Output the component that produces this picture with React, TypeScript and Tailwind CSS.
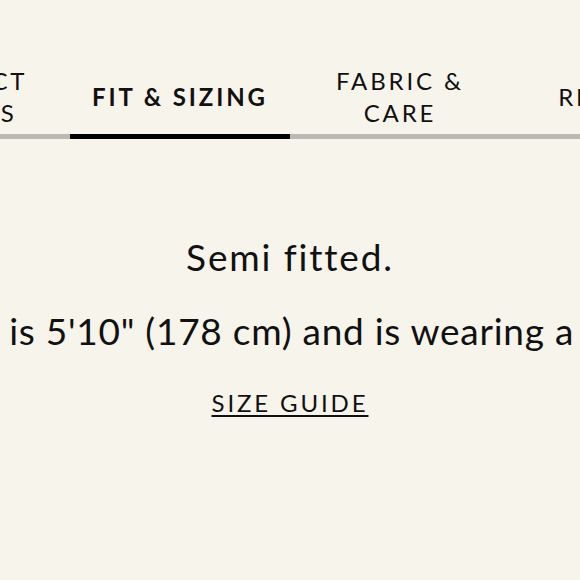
const tabs = [
  { label: ['PRODUCT', 'DETAILS'], active: false },
  { label: ['FIT & SIZING'], active: true },
  { label: ['FABRIC &', 'CARE'], active: false },
  { label: ['REVIEWS'], active: false },
];

export default function App() {
  return (
    <div className="w-[580px] h-[580px] overflow-hidden bg-[#f7f4ec] text-[#111111] font-['Lato',_'Liberation_Sans',_sans-serif]">
      {/* Tabs */}
      <div className="flex ml-[-150px] w-[880px] border-b-[5px] border-[#bcb9b2] h-[139px]">
        {tabs.map((tab) => (
          <div
            key={tab.label.join(' ')}
            className={
              tab.active
                ? 'w-[220px] shrink-0 flex flex-col items-center justify-center text-center mb-[-5px] border-b-[5px] border-black pt-[60px]'
                : 'w-[220px] shrink-0 flex flex-col items-center justify-center text-center pt-[60px]'
            }
          >
            {tab.label.map((line) => (
              <span
                key={line}
                className={
                  tab.active
                    ? 'text-[24px] leading-[32px] font-bold tracking-[0.12em]'
                    : 'text-[24px] leading-[32px] tracking-[0.12em]'
                }
              >
                {line}
              </span>
            ))}
          </div>
        ))}
      </div>

      {/* Content */}
      <div className="flex flex-col items-center pt-[96px]">
        <p className="text-[37px] leading-[44px] tracking-[0.05em] whitespace-nowrap">Semi fitted.</p>
        <div className="w-full flex justify-center mt-[30px]">
          <p className="text-[37px] leading-[44px] tracking-[0.02em] whitespace-nowrap shrink-0">
            Model is 5'10" (178 cm) and is wearing a size S.
          </p>
        </div>
        <a
          href="#"
          className="mt-[34px] text-[24px] leading-[32px] tracking-[0.12em] underline underline-offset-[3px] decoration-[2px]"
        >
          SIZE GUIDE
        </a>
      </div>
    </div>
  );
}
